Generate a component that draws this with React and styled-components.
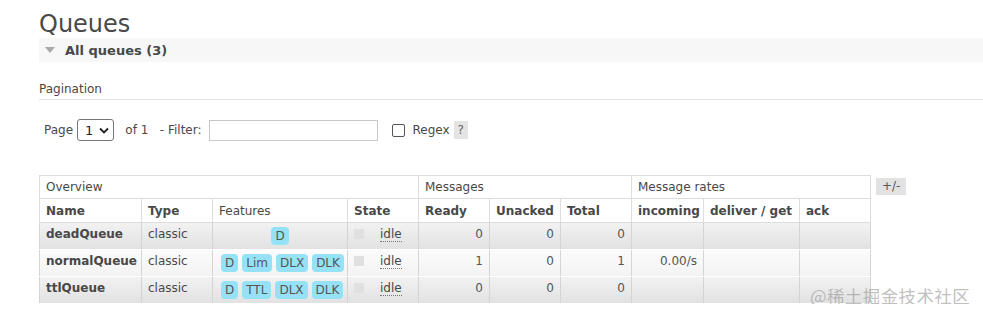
import React from "react";
import styled, { createGlobalStyle } from "styled-components";

const GlobalStyle = createGlobalStyle`
  body {
    margin: 0;
    font-family: "DejaVu Sans", Verdana, sans-serif;
    font-size: 12px;
    color: #484848;
    background: #fff;
  }
`;

const Page = styled.div`
  position: relative;
  padding: 11px 0 0 39px;
`;

const Title = styled.h1`
  margin: 0;
  font-size: 24px;
  font-weight: normal;
  line-height: 27px;
  color: #4a4a4a;
`;

const SectionBar = styled.div`
  display: flex;
  align-items: center;
  gap: 8px;
  height: 24px;
  background: #f7f7f7;
  padding-left: 6px;
  font-weight: bold;
  font-size: 13px;
  color: #484848;
`;

const Arrow = styled.span`
  width: 0;
  height: 0;
  border-left: 5px solid transparent;
  border-right: 5px solid transparent;
  border-top: 6px solid #aaa;
  margin-right: 2px;
`;

const SubHead = styled.h3`
  margin: 20px 0 0;
  padding-bottom: 2px;
  font-size: 12px;
  font-weight: normal;
  line-height: 15px;
  border-bottom: 1px solid #e2e2e2;
`;

const Controls = styled.div`
  display: flex;
  align-items: center;
  height: 22px;
  margin: 19px 0 0 5px;
  white-space: pre;
`;

const Select = styled.div`
  display: flex;
  align-items: center;
  gap: 6px;
  height: 20px;
  margin: 0 11px 0 4px;
  padding: 0 4px 0 7px;
  border: 1px solid #767676;
  border-radius: 3px;
  font-size: 13px;
  color: #222;
`;

const Input = styled.div`
  width: 167px;
  height: 19px;
  margin-left: 7px;
  border: 1px solid #c8c8c8;
`;

const Check = styled.span`
  width: 11px;
  height: 11px;
  margin: 0 8px 0 14px;
  border: 1px solid #555;
  border-radius: 2px;
`;

const Help = styled.span`
  margin-left: 4px;
  padding: 2px 4px;
  background: #e4e4e4;
  color: #666;
`;

const TableRow = styled.div`
  display: flex;
  align-items: flex-start;
  gap: 5px;
  margin-top: 34px;
`;

const Table = styled.table`
  border-collapse: collapse;
  table-layout: fixed;
  width: 831px;
`;

const GroupTh = styled.th`
  height: 22px;
  padding: 0 6px;
  text-align: left;
  font-weight: normal;
  border: 1px solid #ddd;
`;

const Th = styled.th`
  height: 23px;
  padding: 0 6px;
  text-align: left;
  font-weight: ${(p) => (p.$plain ? "normal" : "bold")};
  border: 1px solid #ddd;
`;

const Tr = styled.tr`
  background: ${(p) =>
    p.$alt
      ? "linear-gradient(#fbfbfb, #f3f3f3)"
      : "linear-gradient(#f2f2f2, #e1e1e1)"};
`;

const Td = styled.td`
  height: 22px;
  padding: 4px 6px 0;
  vertical-align: top;
  border-left: 1px solid #d4d4d4;
  border-right: 1px solid #d4d4d4;
  border-bottom: 1px solid #fff;
  text-align: ${(p) => p.$align || "left"};
  font-weight: ${(p) => (p.$bold ? "bold" : "normal")};
  color: ${(p) => (p.$num ? "#555" : "#484848")};
  white-space: nowrap;
  line-height: 15px;
`;

const Badge = styled.span`
  display: inline-block;
  margin: 0 2px;
  padding: 2px 4px 1px;
  border-radius: 4px;
  background: #95e2f6;
  color: #555;
  line-height: 15px;
`;

const StateBox = styled.span`
  display: inline-block;
  width: 10px;
  height: 10px;
  margin-right: 16px;
  background: #e0e0e0;
  vertical-align: -1px;
`;

const Idle = styled.abbr`
  text-decoration: none;
  border-bottom: 1px dotted #777;
`;

const Toggle = styled.span`
  margin-top: 3px;
  padding: 1px 6px;
  background: #e2e2e2;
  color: #555;
  line-height: 15px;
`;

const Watermark = styled.div`
  position: absolute;
  left: 810px;
  top: 283px;
  font-family: "Noto Sans CJK SC", sans-serif;
  font-size: 17.5px;
  color: rgba(150, 150, 150, 0.6);
  letter-spacing: 0.4px;
`;

const queues = [
  { name: "deadQueue", features: ["D"], ready: 0, unacked: 0, total: 0, incoming: "" },
  { name: "normalQueue", features: ["D", "Lim", "DLX", "DLK"], ready: 1, unacked: 0, total: 1, incoming: "0.00/s" },
  { name: "ttlQueue", features: ["D", "TTL", "DLX", "DLK"], ready: 0, unacked: 0, total: 0, incoming: "" },
];

const widths = [102, 71, 135, 71, 71, 71, 71, 72, 96, 71];

export default function App() {
  return (
    <Page>
      <GlobalStyle />
      <Title>Queues</Title>
      <SectionBar>
        <Arrow />
        All queues (3)
      </SectionBar>
      <SubHead>Pagination</SubHead>
      <Controls>
        Page
        <Select>
          1
          <svg width="10" height="7" viewBox="0 0 10 7">
            <path d="M1 1.5 L5 5.5 L9 1.5" fill="none" stroke="#222" strokeWidth="1.8" />
          </svg>
        </Select>
        {"of 1   - Filter:"}
        <Input />
        <Check />
        Regex
        <Help>?</Help>
      </Controls>
      <TableRow>
        <Table>
          <colgroup>
            {widths.map((w, i) => (
              <col key={i} style={{ width: w }} />
            ))}
          </colgroup>
          <thead>
            <tr>
              <GroupTh colSpan={4}>Overview</GroupTh>
              <GroupTh colSpan={3}>Messages</GroupTh>
              <GroupTh colSpan={3}>Message rates</GroupTh>
            </tr>
            <tr>
              <Th>Name</Th>
              <Th>Type</Th>
              <Th $plain>Features</Th>
              <Th>State</Th>
              <Th>Ready</Th>
              <Th>Unacked</Th>
              <Th>Total</Th>
              <Th>incoming</Th>
              <Th>deliver / get</Th>
              <Th>ack</Th>
            </tr>
          </thead>
          <tbody>
            {queues.map((q, i) => (
              <Tr key={q.name} $alt={i % 2 === 1}>
                <Td $bold>{q.name}</Td>
                <Td>classic</Td>
                <Td $align="center">
                  {q.features.map((f) => (
                    <Badge key={f}>{f}</Badge>
                  ))}
                </Td>
                <Td>
                  <StateBox />
                  <Idle>idle</Idle>
                </Td>
                <Td $align="right" $num>{q.ready}</Td>
                <Td $align="right" $num>{q.unacked}</Td>
                <Td $align="right" $num>{q.total}</Td>
                <Td $align="right" $num>{q.incoming}</Td>
                <Td />
                <Td />
              </Tr>
            ))}
          </tbody>
        </Table>
        <Toggle>+/-</Toggle>
      </TableRow>
      <Watermark>@稀土掘金技术社区</Watermark>
    </Page>
  );
}
